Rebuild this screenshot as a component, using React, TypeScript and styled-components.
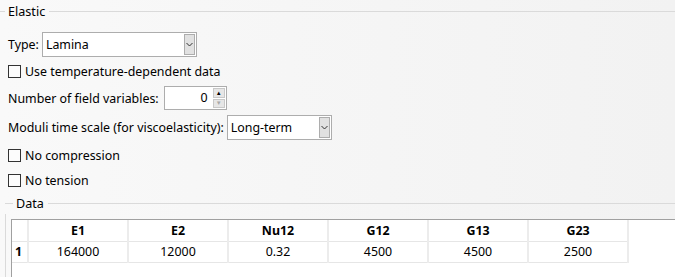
import styled, { createGlobalStyle } from "styled-components";

const Global = createGlobalStyle`
  html, body { margin: 0; padding: 0; }
  body { background: #f5f5f5; }
`;

const Page = styled.div`
  width: 675px;
  height: 277px;
  overflow: hidden;
  display: flex;
  flex-direction: column;
  background: linear-gradient(to right, #f9f9f9, #f2f2f2);
  font-family: "Noto Sans", "Open Sans", sans-serif;
  font-size: 12.4px;
  color: #000;
`;

const GroupTitle = styled.div<{ $lead: number }>`
  display: flex;
  align-items: center;
  height: 22px;
  flex-shrink: 0;

  &::before {
    content: "";
    width: ${p => p.$lead}px;
    height: 1px;
    background: #dadada;
  }
  &::after {
    content: "";
    flex: 1;
    height: 1px;
    background: #dadada;
  }
`;

const GroupLabel = styled.span`
  padding: 0 4px 0 3px;
  font-size: 12.6px;
`;

const Form = styled.div`
  display: flex;
  flex-direction: column;
  padding-left: 8px;
`;

const Row = styled.div<{ $h: number; $top: number }>`
  display: flex;
  align-items: center;
  height: ${p => p.$h}px;
  margin-top: ${p => p.$top}px;
  white-space: nowrap;
`;

const Label = styled.span`
  margin-right: 3px;
`;

const Combo = styled.div<{ $w: number }>`
  display: flex;
  align-items: stretch;
  width: ${p => p.$w}px;
  height: 25px;
  box-sizing: border-box;
  border: 1px solid #adadad;
  background: #fff;
  padding: 1px;
`;

const ComboText = styled.span`
  flex: 1;
  display: flex;
  align-items: center;
  padding-left: 2px;
`;

const ComboButton = styled.span`
  width: 11px;
  box-sizing: border-box;
  border: 1px solid #adadad;
  background: #e1e1e1;
  display: flex;
  align-items: center;
  justify-content: center;
`;

const Check = styled.span`
  width: 13px;
  height: 13px;
  box-sizing: border-box;
  border: 1px solid #333;
  background: #fcfcfc;
  margin-right: 4px;
`;

const Spin = styled.div`
  display: flex;
  width: 63px;
  height: 24px;
  box-sizing: border-box;
  border: 1px solid #adadad;
  background: #fff;
  margin-left: 2px;
`;

const SpinValue = styled.span`
  flex: 1;
  text-align: right;
  padding-right: 5px;
  line-height: 22px;
`;

const SpinButtons = styled.div`
  display: flex;
  flex-direction: column;
  gap: 1px;
  padding: 1px 1px 1px 0;
  width: 12px;
`;

const SpinButton = styled.span<{ $disabled?: boolean }>`
  flex: 1;
  box-sizing: border-box;
  border: 1px solid #c8c8c8;
  background: #e6e6e6;
  display: flex;
  align-items: center;
  justify-content: center;
  font-size: 6px;
  line-height: 1;
  color: ${p => (p.$disabled ? "#a8a8a8" : "#000")};
`;

const DataGroup = styled.div`
  flex: 1;
  display: flex;
  flex-direction: column;
  margin-left: 5px;
  margin-top: 2px;
`;

const DataBody = styled.div`
  flex: 1;
  border-left: 1px solid #dadada;
  padding: 5px 0 0 5px;
  display: flex;
`;

const TableBox = styled.div`
  flex: 1;
  background: #fff;
  border-top: 1px solid #a0a0a0;
  border-left: 1px solid #a0a0a0;
`;

const Table = styled.table`
  border-collapse: collapse;
  table-layout: fixed;
  font-size: 12.4px;
`;

const HeadCell = styled.th<{ $w: number }>`
  width: ${p => p.$w}px;
  height: 21px;
  padding: 0;
  box-sizing: border-box;
  font-weight: bold;
  text-align: center;
  border-right: 2px solid #ececec;
  border-bottom: 1px solid #e6e6e6;
`;

const RowHead = styled.th`
  height: 20px;
  padding: 0 0 0 3px;
  text-align: left;
  font-weight: bold;
  border-right: 2px solid #ececec;
  border-bottom: 1px solid #e6e6e6;
`;

const Cell = styled.td`
  height: 20px;
  padding: 0;
  text-align: center;
  border-right: 2px solid #ececec;
  border-bottom: 1px solid #e6e6e6;
`;

const Chevron = () => (
  <svg width="7" height="5" viewBox="0 0 7 5">
    <path d="M0.5 1 L3.5 4 L6.5 1" fill="none" stroke="#333" strokeWidth="1" />
  </svg>
);

const columns = ["E1", "E2", "Nu12", "G12", "G13", "G23"];
const values = ["164000", "12000", "0.32", "4500", "4500", "2500"];

export default function App() {
  return (
    <Page>
      <Global />
      <GroupTitle $lead={5}>
        <GroupLabel>Elastic</GroupLabel>
      </GroupTitle>
      <Form>
        <Row $h={25} $top={10}>
          <Label>Type:</Label>
          <Combo $w={155}>
            <ComboText>Lamina</ComboText>
            <ComboButton><Chevron /></ComboButton>
          </Combo>
        </Row>
        <Row $h={20} $top={4}>
          <Check />
          <span>Use temperature-dependent data</span>
        </Row>
        <Row $h={24} $top={5}>
          <Label>Number of field variables:</Label>
          <Spin>
            <SpinValue>0</SpinValue>
            <SpinButtons>
              <SpinButton>▲</SpinButton>
              <SpinButton $disabled>▼</SpinButton>
            </SpinButtons>
          </Spin>
        </Row>
        <Row $h={25} $top={5}>
          <Label>Moduli time scale (for viscoelasticity):</Label>
          <Combo $w={105}>
            <ComboText>Long-term</ComboText>
            <ComboButton><Chevron /></ComboButton>
          </Combo>
        </Row>
        <Row $h={20} $top={5}>
          <Check />
          <span>No compression</span>
        </Row>
        <Row $h={20} $top={5}>
          <Check />
          <span>No tension</span>
        </Row>
      </Form>
      <DataGroup>
        <GroupTitle $lead={8}>
          <GroupLabel>Data</GroupLabel>
        </GroupTitle>
        <DataBody>
          <TableBox>
            <Table>
              <thead>
                <tr>
                  <HeadCell $w={16} />
                  {columns.map(c => (
                    <HeadCell key={c} $w={100}>{c}</HeadCell>
                  ))}
                </tr>
              </thead>
              <tbody>
                <tr>
                  <RowHead>1</RowHead>
                  {values.map((v, i) => (
                    <Cell key={i}>{v}</Cell>
                  ))}
                </tr>
              </tbody>
            </Table>
          </TableBox>
        </DataBody>
      </DataGroup>
    </Page>
  );
}
